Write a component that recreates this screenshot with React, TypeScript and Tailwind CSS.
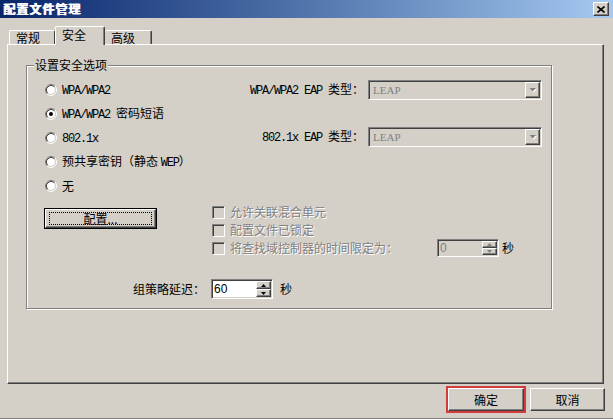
import React from "react";

const raised =
  "border border-t-white border-l-white border-r-[#404040] border-b-[#404040] shadow-[inset_-1px_-1px_0_#808080]";
const sunken =
  "border border-t-[#808080] border-l-[#808080] border-r-white border-b-white shadow-[inset_1px_1px_0_#404040,inset_-1px_-1px_0_#d4d0c8]";
const disabledText = "text-[#808080] [text-shadow:1px_1px_0_#ffffff]";

function L({ children }: { children: React.ReactNode }) {
  return (
    <span className="font-['Liberation_Mono',monospace] tracking-[-1.2px]">{children}</span>
  );
}

function Radio({ checked }: { checked?: boolean }) {
  return (
    <svg width="12" height="12" viewBox="0 0 12 12" className="shrink-0">
      <circle cx="6" cy="6" r="4.5" fill="#ffffff" />
      <path d="M2.11 9.89 A5.5 5.5 0 0 1 9.89 2.11" stroke="#808080" fill="none" />
      <path d="M9.89 2.11 A5.5 5.5 0 0 1 2.11 9.89" stroke="#ffffff" fill="none" />
      <path d="M2.82 9.18 A4.5 4.5 0 0 1 9.18 2.82" stroke="#404040" fill="none" />
      <path d="M9.18 2.82 A4.5 4.5 0 0 1 2.82 9.18" stroke="#d4d0c8" fill="none" />
      {checked && <circle cx="6" cy="6" r="2" fill="#000000" />}
    </svg>
  );
}

function Check() {
  return <span className={`w-[13px] h-[13px] shrink-0 bg-[#d4d0c8] ${sunken}`} />;
}

function DownArrow() {
  return (
    <svg width="8" height="5" viewBox="0 0 8 5">
      <polygon points="1.5,1 8,1 4.75,4.5" fill="#ffffff" />
      <polygon points="0.5,0 7,0 3.75,3.5" fill="#808080" />
    </svg>
  );
}

function Select() {
  return (
    <div className={`ml-[4px] w-[174px] h-[20px] p-[1px] bg-[#d4d0c8] flex items-center ${sunken}`}>
      <span className="flex-1 pl-[3px] font-['Liberation_Serif',serif] text-[11px] leading-[14px] text-[#808080]">
        LEAP
      </span>
      <span className={`w-[15px] h-[16px] bg-[#d4d0c8] flex items-center justify-center ${raised}`}>
        <DownArrow />
      </span>
    </div>
  );
}

function SpinArrow({ up, color }: { up?: boolean; color: string }) {
  return (
    <svg width="5" height="3" viewBox="0 0 5 3">
      <polygon points={up ? "2.5,0 5,3 0,3" : "0,0 5,0 2.5,3"} fill={color} />
    </svg>
  );
}

function Spin({
  value,
  disabled,
  h,
}: {
  value: string;
  disabled?: boolean;
  h: string;
}) {
  return (
    <div
      className={`w-[62px] ${h} p-[1px] flex ${sunken} ${disabled ? "bg-[#d4d0c8]" : "bg-white"}`}
    >
      <span
        className={`flex-1 pl-[1px] flex items-center font-['Liberation_Sans',sans-serif] text-[12px] ${
          disabled ? "text-[#808080]" : "text-black"
        }`}
      >
        {value}
      </span>
      <div className="w-[15px] flex flex-col">
        <span className={`flex-1 bg-[#d4d0c8] flex items-center justify-center ${raised}`}>
          <SpinArrow up color={disabled ? "#808080" : "#000000"} />
        </span>
        <span className={`flex-1 bg-[#d4d0c8] flex items-center justify-center ${raised}`}>
          <SpinArrow color={disabled ? "#808080" : "#000000"} />
        </span>
      </div>
    </div>
  );
}

export default function App() {
  const radios: { label: React.ReactNode; checked?: boolean }[] = [
    { label: <L>WPA/WPA2</L> },
    {
      label: (
        <>
          <L>WPA/WPA2 </L>密码短语
        </>
      ),
      checked: true,
    },
    { label: <L>802.1x</L> },
    {
      label: (
        <>
          预共享密钥（静态 <L>WEP</L>）
        </>
      ),
    },
    { label: "无" },
  ];

  return (
    <div className="w-[613px] h-[419px] bg-[#d4d0c8] border-b border-b-[#808080] overflow-hidden flex flex-col font-['Noto_Sans_CJK_SC','Liberation_Sans',sans-serif] text-[12px] leading-[14px] text-black">
      {/* Title bar */}
      <div className="h-[18px] shrink-0 bg-linear-to-r from-[#0a246a] to-[#a6caf0] flex items-center justify-between pl-[3px] pr-[4px]">
        <span className="text-white font-bold tracking-[1px] [text-shadow:1px_0_0_#ffffff]">配置文件管理</span>
        <span className={`w-[16px] h-[14px] bg-[#d4d0c8] flex items-center justify-center ${raised}`}>
          <svg width="8" height="7" viewBox="0 0 8 7">
            <path d="M0.5 0.5 L7.5 6.5 M7.5 0.5 L0.5 6.5" stroke="#000" strokeWidth="1.6" />
          </svg>
        </span>
      </div>

      {/* Tabs + panel */}
      <div className="pl-[7px] pr-[9px] pt-[8px] flex flex-col">
        <div className="h-[18px] flex items-end pl-[2px]">
          <div className="w-[46px] h-[14px] border-t border-l border-t-white border-l-white border-r border-r-[#404040] rounded-t-[2px] flex items-center pl-[6px]">
            常规
          </div>
          <div className="relative z-10 w-[50px] h-[19px] -mb-[1px] bg-[#d4d0c8] border-t border-l border-t-white border-l-white border-r border-r-[#404040] shadow-[inset_-1px_0_0_#808080] rounded-t-[2px] flex items-center pl-[6px] pb-[2px]">
            安全
          </div>
          <div className="w-[47px] h-[14px] border-t border-t-white border-r border-r-[#404040] shadow-[inset_-1px_0_0_#808080] rounded-t-[2px] flex items-center pl-[6px]">
            高级
          </div>
        </div>

        <div className="h-[340px] border border-t-white border-l-white border-r-[#404040] border-b-[#404040] shadow-[inset_-1px_-1px_0_#808080]">
          {/* Group box */}
          <div className="relative ml-[18px] mt-[20px] w-[526px] h-[244px] border border-[#808080] shadow-[1px_1px_0_#ffffff,inset_1px_1px_0_#ffffff]">
            <span className="absolute left-[7px] top-[-8px] px-[1px] bg-[#d4d0c8]">设置安全选项</span>
            <div className="pl-[18px] pt-[12px] flex flex-col">
              <div className="flex">
                <div className="w-[195px] flex flex-col">
                  {radios.map((r, i) => (
                    <div key={i} className="h-[24px] flex items-center gap-[5px]">
                      <Radio checked={r.checked} />
                      <span>{r.label}</span>
                    </div>
                  ))}
                </div>
                <div className="flex flex-col pt-[2px]">
                  <div className="flex items-center">
                    <span className="w-[124px] text-right">
                      <L>WPA/WPA2 EAP </L>类型：
                    </span>
                    <Select />
                  </div>
                  <div className="flex items-center mt-[27px]">
                    <span className="w-[124px] text-right">
                      <L>802.1x EAP </L>类型：
                    </span>
                    <Select />
                  </div>
                </div>
              </div>

              <div className="flex mt-[5px]">
                <div className="mt-[5px] -ml-[1px] w-[113px] h-[21px] border border-black">
                  <div className="relative w-full h-full border border-t-white border-l-white border-r-[#404040] border-b-[#404040] shadow-[inset_-1px_-1px_0_#808080] flex items-center justify-center">
                    <span className="absolute left-[3px] right-[3px] top-[2px] bottom-[2px] border border-dotted border-black" />
                    <span>配置...</span>
                  </div>
                </div>
                <div className="ml-[55px] flex flex-col">
                  <div className="h-[18px] flex items-center gap-[5px]">
                    <Check />
                    <span className={disabledText}>允许关联混合单元</span>
                  </div>
                  <div className="h-[18px] flex items-center gap-[5px]">
                    <Check />
                    <span className={disabledText}>配置文件已锁定</span>
                  </div>
                  <div className="h-[18px] flex items-center">
                    <Check />
                    <span className={`ml-[5px] w-[207px] ${disabledText}`}>将查找域控制器的时间限定为：</span>
                    <Spin value="0" disabled h="h-[18px]" />
                    <span className="ml-[3px]">秒</span>
                  </div>
                </div>
              </div>

              <div className="flex items-center mt-[22px] ml-[88px]">
                <span className="w-[72px]">组策略延迟：</span>
                <div className="ml-[6px]">
                  <Spin value="60" h="h-[20px]" />
                </div>
                <span className="ml-[7px]">秒</span>
              </div>
            </div>
          </div>
        </div>
      </div>

      {/* Footer buttons */}
      <div className="pt-[2px] pr-[8px] flex justify-end items-center">
        <div className="border-2 border-[#d23c3c] shadow-[inset_0_0_0_1px_#f2b8b8]">
          <div className={`w-[76px] h-[23px] bg-[#d4d0c8] flex items-center justify-center ${raised}`}>
            确定
          </div>
        </div>
        <div className={`ml-[4px] w-[75px] h-[23px] bg-[#d4d0c8] flex items-center justify-center ${raised}`}>
          取消
        </div>
      </div>
    </div>
  );
}
